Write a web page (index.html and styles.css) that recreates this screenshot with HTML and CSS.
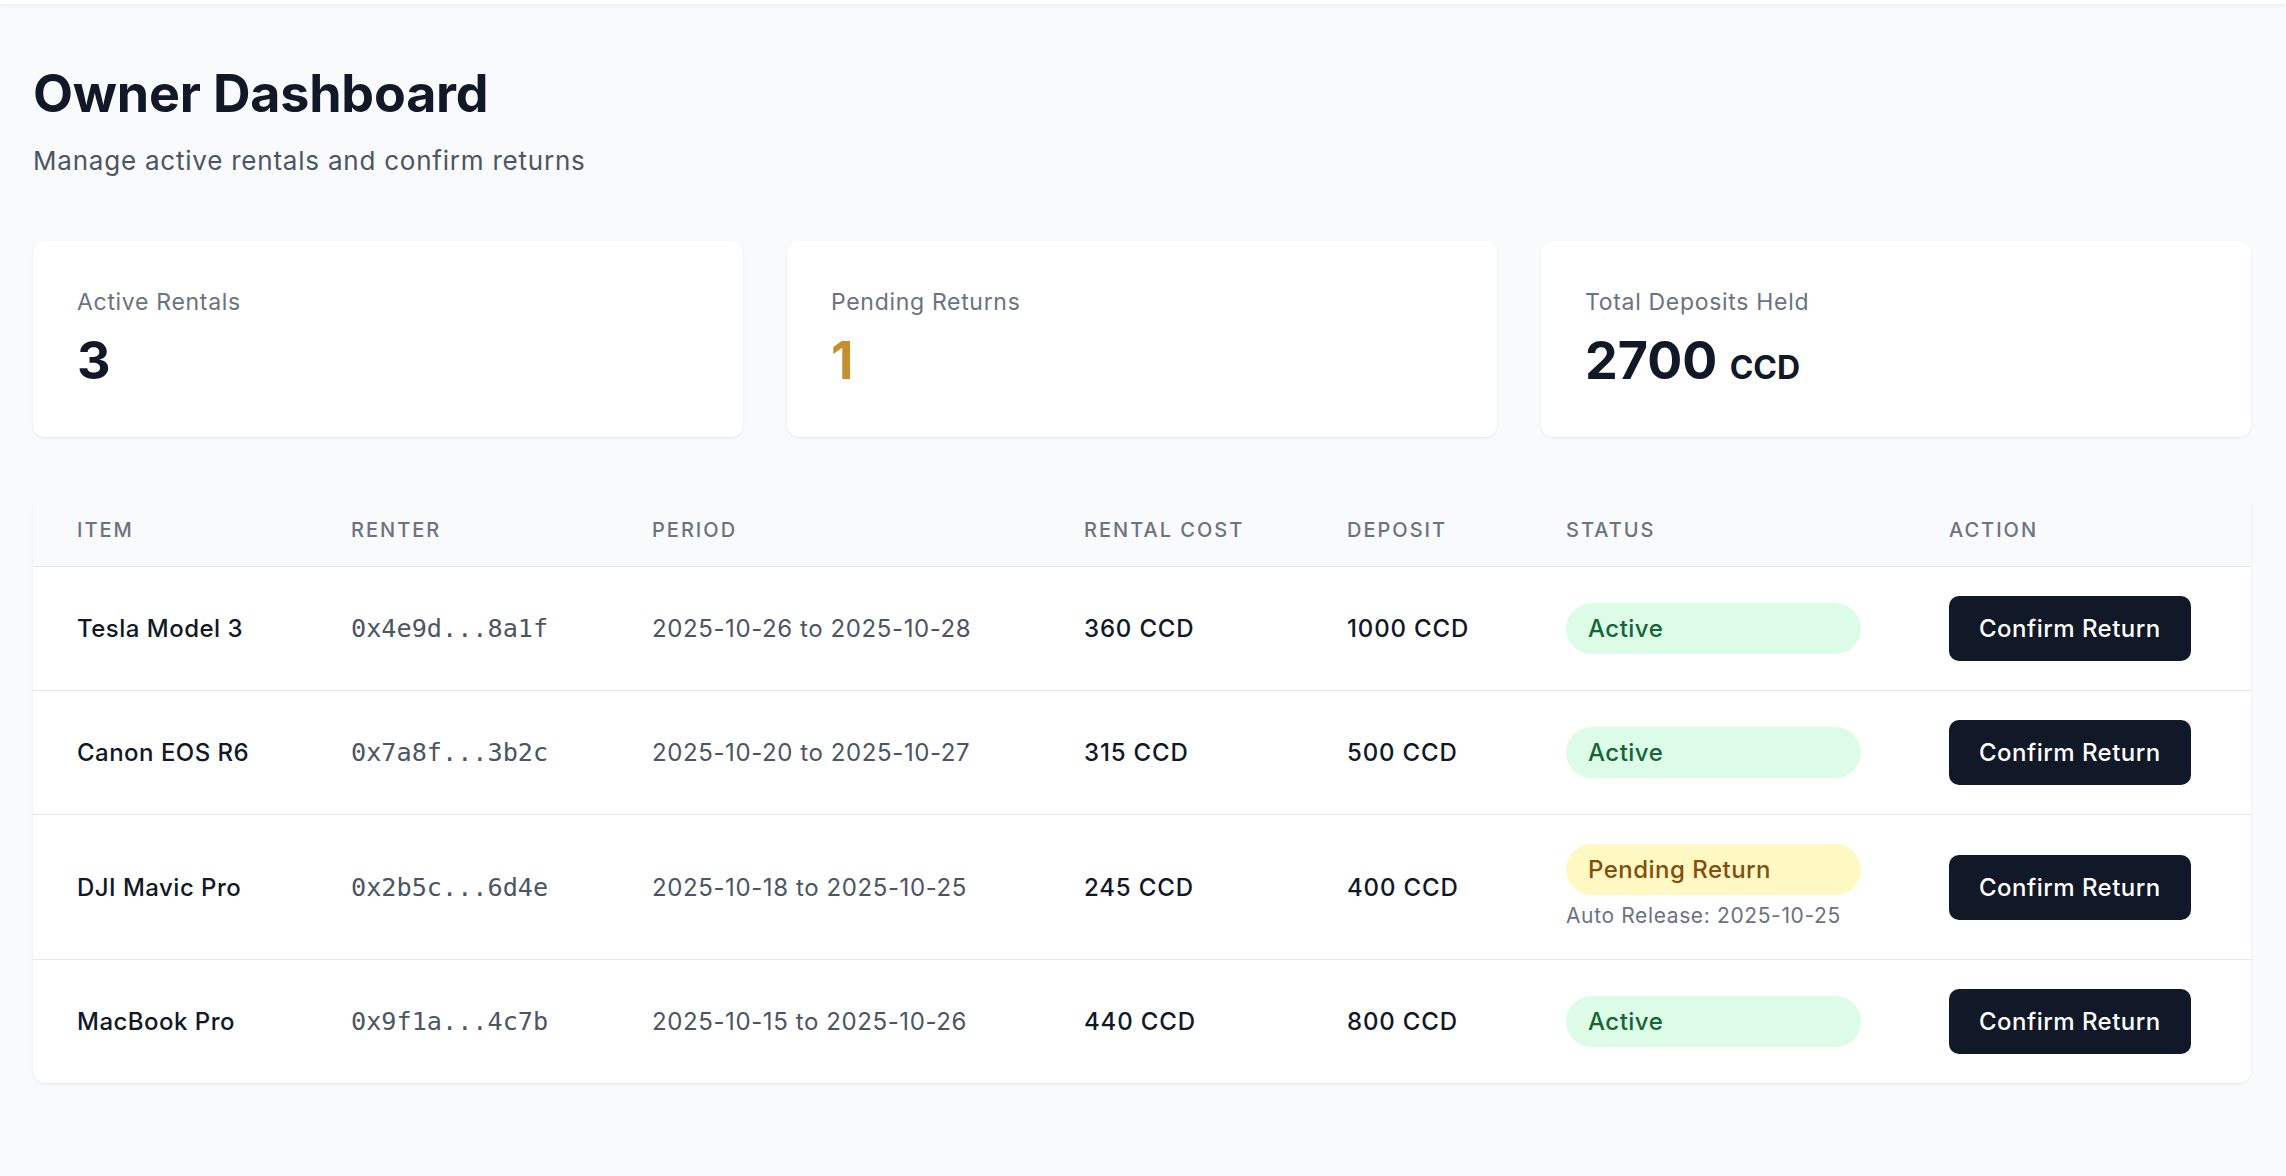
FILE: index.html
```html
<!DOCTYPE html>
<html lang="en">
<head>
<meta charset="utf-8">
<title>Owner Dashboard</title>
<link rel="stylesheet" href="styles.css">
</head>
<body>
<div class="topbar"></div>
<main class="page">
  <header class="page-head">
    <h1 class="title">Owner Dashboard</h1>
    <p class="subtitle">Manage active rentals and confirm returns</p>
  </header>

  <section class="stats">
    <div class="stat-card">
      <div class="stat-label">Active Rentals</div>
      <div class="stat-value">3</div>
    </div>
    <div class="stat-card">
      <div class="stat-label">Pending Returns</div>
      <div class="stat-value stat-pending">1</div>
    </div>
    <div class="stat-card">
      <div class="stat-label">Total Deposits Held</div>
      <div class="stat-value">2700 <span class="stat-unit">CCD</span></div>
    </div>
  </section>

  <section class="table-card">
    <table class="rentals">
      <colgroup>
        <col class="c-item"><col class="c-renter"><col class="c-period"><col class="c-cost"><col class="c-deposit"><col class="c-status"><col class="c-action">
      </colgroup>
      <thead>
        <tr>
          <th>Item</th><th>Renter</th><th>Period</th><th>Rental Cost</th><th>Deposit</th><th>Status</th><th>Action</th>
        </tr>
      </thead>
      <tbody>
        <tr>
          <td class="item">Tesla Model 3</td>
          <td class="mono">0x4e9d...8a1f</td>
          <td class="period">2025-10-26 to 2025-10-28</td>
          <td class="amount">360 CCD</td>
          <td class="amount">1000 CCD</td>
          <td><span class="badge badge-active">Active</span></td>
          <td><button class="btn">Confirm Return</button></td>
        </tr>
        <tr>
          <td class="item">Canon EOS R6</td>
          <td class="mono">0x7a8f...3b2c</td>
          <td class="period">2025-10-20 to 2025-10-27</td>
          <td class="amount">315 CCD</td>
          <td class="amount">500 CCD</td>
          <td><span class="badge badge-active">Active</span></td>
          <td><button class="btn">Confirm Return</button></td>
        </tr>
        <tr>
          <td class="item">DJI Mavic Pro</td>
          <td class="mono">0x2b5c...6d4e</td>
          <td class="period">2025-10-18 to 2025-10-25</td>
          <td class="amount">245 CCD</td>
          <td class="amount">400 CCD</td>
          <td>
            <span class="badge badge-pending">Pending Return</span>
            <div class="auto-release">Auto Release: 2025-10-25</div>
          </td>
          <td><button class="btn">Confirm Return</button></td>
        </tr>
        <tr>
          <td class="item">MacBook Pro</td>
          <td class="mono">0x9f1a...4c7b</td>
          <td class="period">2025-10-15 to 2025-10-26</td>
          <td class="amount">440 CCD</td>
          <td class="amount">800 CCD</td>
          <td><span class="badge badge-active">Active</span></td>
          <td><button class="btn">Confirm Return</button></td>
        </tr>
      </tbody>
    </table>
  </section>
</main>
</body>
</html>
```

FILE: styles.css
```css
* { box-sizing: border-box; }

html, body {
  margin: 0;
  padding: 0;
  background: #f9fafb;
  font-family: Inter, "Noto Sans", "Liberation Sans", sans-serif;
  color: #111827;
}

.topbar {
  height: 4px;
  background: #ffffff;
  box-shadow: 0 1px 4px rgba(0, 0, 0, 0.08);
  position: relative;
  z-index: 1;
}

.page {
  padding: 61px 35px 80px 33px;
}

.title {
  margin: 0;
  font-size: 52px;
  line-height: 58px;
  font-weight: 700;
  color: #111827;
  letter-spacing: -0.2px;
}

.subtitle {
  margin: 18px 0 0;
  font-size: 26px;
  line-height: 40px;
  color: #4b5563;
  letter-spacing: 0.03em;
}

.stats {
  display: grid;
  grid-template-columns: repeat(3, 1fr);
  gap: 44px;
  margin-top: 60px;
}

.stat-card {
  background: #ffffff;
  border-radius: 12px;
  box-shadow: 0 1px 3px rgba(0, 0, 0, 0.06), 0 1px 2px rgba(0, 0, 0, 0.03);
  padding: 44px 44px 40px;
}

.stat-label {
  font-size: 23px;
  line-height: 35px;
  color: #6b7280;
  letter-spacing: 0.03em;
}

.stat-value {
  margin-top: 12px;
  font-size: 52px;
  line-height: 58px;
  font-weight: 700;
  color: #111827;
}

.stat-pending { color: #c58f30; }

.stat-unit {
  font-size: 32px;
  font-weight: 700;
}

.table-card {
  margin-top: 58px;
  background: #ffffff;
  border-radius: 12px;
  box-shadow: 0 1px 3px rgba(0, 0, 0, 0.06), 0 1px 2px rgba(0, 0, 0, 0.03);
  overflow: hidden;
}

.rentals {
  width: 100%;
  border-collapse: collapse;
  table-layout: fixed;
}

.c-item { width: 274px; }
.c-renter { width: 301px; }
.c-period { width: 432px; }
.c-cost { width: 263px; }
.c-deposit { width: 219px; }
.c-status { width: 383px; }
.c-action { width: 346px; }

.rentals thead tr {
  background: #f9fafb;
  border-bottom: 1px solid #e5e7eb;
}

.rentals th {
  text-align: left;
  padding: 21px 44px;
  font-size: 20px;
  line-height: 29px;
  font-weight: 500;
  text-transform: uppercase;
  letter-spacing: 0.1em;
  color: #6b7280;
}

.rentals tbody tr {
  border-bottom: 1px solid #e5e7eb;
}

.rentals tbody tr:last-child {
  border-bottom: none;
}

.rentals td {
  padding: 29px 44px;
  font-size: 24px;
  line-height: 35px;
  letter-spacing: 0.02em;
  vertical-align: middle;
  white-space: nowrap;
}

.item {
  font-weight: 500;
  color: #111827;
}

.rentals td.mono {
  font-family: "DejaVu Sans Mono", "Liberation Mono", monospace;
  font-size: 25.2px;
  letter-spacing: 0;
  color: #4b5563;
}

.rentals td.period {
  color: #4b5563;
  letter-spacing: 0.025em;
}

.rentals td.amount {
  font-weight: 500;
  color: #111827;
  letter-spacing: 0.035em;
}

.badge {
  display: block;
  padding: 8px 22px;
  border-radius: 999px;
  font-size: 24px;
  line-height: 35px;
  font-weight: 500;
  letter-spacing: 0.02em;
}

.badge-active {
  background: #dcfce7;
  color: #166534;
}

.badge-pending {
  background: #fef9c3;
  color: #854d0e;
}

.auto-release {
  margin-top: 6px;
  font-size: 21px;
  line-height: 29px;
  letter-spacing: 0.03em;
  color: #6b7280;
}

.btn {
  display: inline-block;
  border: none;
  background: #111827;
  color: #ffffff;
  font-family: Inter, "Noto Sans", "Liberation Sans", sans-serif;
  font-size: 24px;
  line-height: 35px;
  font-weight: 500;
  letter-spacing: 0.02em;
  padding: 15px 30px;
  border-radius: 10px;
  cursor: pointer;
}
```
